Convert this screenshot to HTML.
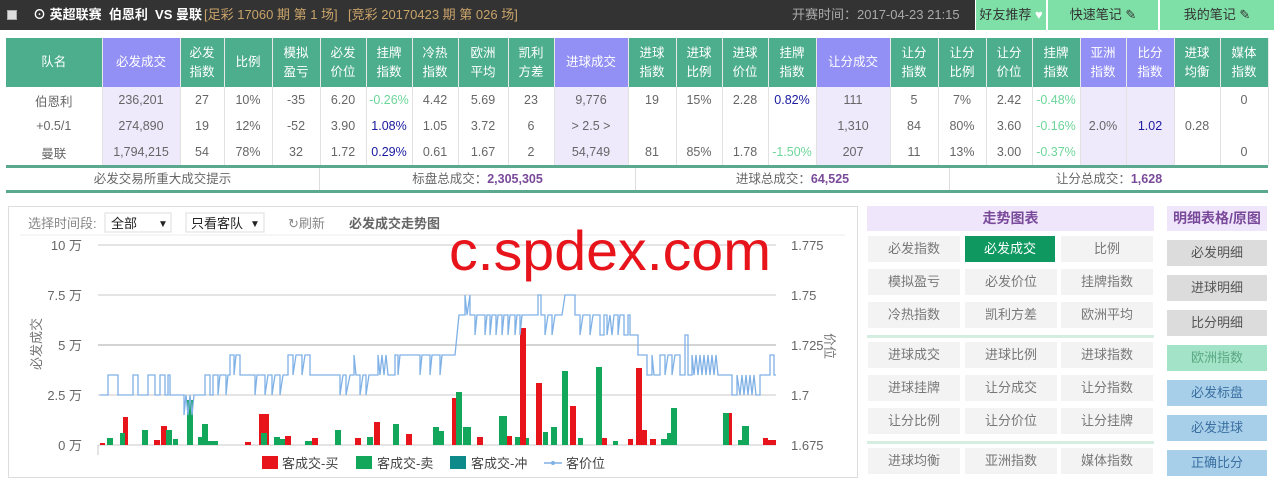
<!DOCTYPE html>
<html><head><meta charset="utf-8"><style>
*{margin:0;padding:0;box-sizing:border-box}
body{width:1274px;height:484px;background:#fff;font-family:"Liberation Sans","Noto Sans CJK SC",sans-serif;position:relative;overflow:hidden;color:#666}
.top{position:absolute;left:0;top:0;width:975px;height:30px;background:#333;color:#fff;font-size:13px;line-height:30px}
.top span{position:absolute;top:0;white-space:nowrap}
.btn{position:absolute;top:0;height:30px;background:#7ee0a7;color:#333;font-size:13px;line-height:30px;text-align:center}
table{position:absolute;left:6px;top:38px;border-collapse:collapse;table-layout:fixed;font-size:12.5px}
th{background:#4dae8d;color:#fff;font-weight:normal;height:49px;line-height:19px;border-right:1px solid #e8e8e8;text-align:center}
th.p{background:#9390f5}
td{height:26px;text-align:center;border-right:1px solid #e2e2e2;color:#666;padding:0}
td.p{background:#efe9fc}
.g{color:#6cd69a}.b{color:#1a1aa0}
.sum{position:absolute;left:6px;top:165px;width:1262px;height:28px;border-top:3px solid #5aa88d;border-bottom:3px solid #5aa88d;font-size:12.5px;line-height:22px}
.sum div{position:absolute;top:0;height:22px;text-align:center;border-right:1px solid #ddd}
.sum b{color:#7a4a9a}
.panel{position:absolute;left:8px;top:206px;width:850px;height:272px;border:1px solid #ddd}
.rb{position:absolute;height:26px;background:#f3f3f3;font-size:13px;line-height:26px;text-align:center;color:#777}
.rc{position:absolute;left:1167px;width:100px;height:26px;font-size:13px;line-height:26px;text-align:center;color:#555}
</style></head><body>
<div class="top">
<span style="left:7px;top:10px;width:10px;height:10px;background:#ddd;border:1px solid #aaa"></span>
<span style="left:33px;font-weight:bold">⊙ 英超联赛&nbsp;&nbsp;伯恩利&nbsp;&nbsp;VS 曼联</span>
<span style="left:204px;color:#c9a36a">[足彩 17060 期 第 1 场]</span>
<span style="left:348px;color:#c9a36a">[竞彩 20170423 期 第 026 场]</span>
<span style="left:792px;color:#aaa">开赛时间：2017-04-23 21:15</span>
</div>
<div class="btn" style="left:976px;width:70px">好友推荐 <span style="color:#fff">♥</span></div>
<div class="btn" style="left:1048px;width:110px">快速笔记 ✎</div>
<div class="btn" style="left:1160px;width:114px">我的笔记 ✎</div>

<table>
<colgroup><col style="width:96px"><col style="width:78px"><col style="width:44px"><col style="width:48px"><col style="width:48px"><col style="width:46px"><col style="width:46px"><col style="width:46px"><col style="width:50px"><col style="width:46px"><col style="width:74px"><col style="width:48px"><col style="width:46px"><col style="width:46px"><col style="width:48px"><col style="width:74px"><col style="width:48px"><col style="width:48px"><col style="width:46px"><col style="width:48px"><col style="width:46px"><col style="width:48px"><col style="width:46px"><col style="width:48px"></colgroup>
<tr><th>队名</th><th class="p">必发成交</th><th>必发<br>指数</th><th>比例</th><th>模拟<br>盈亏</th><th>必发<br>价位</th><th>挂牌<br>指数</th><th>冷热<br>指数</th><th>欧洲<br>平均</th><th>凯利<br>方差</th><th class="p">进球成交</th><th>进球<br>指数</th><th>进球<br>比例</th><th>进球<br>价位</th><th>挂牌<br>指数</th><th class="p">让分成交</th><th>让分<br>指数</th><th>让分<br>比例</th><th>让分<br>价位</th><th>挂牌<br>指数</th><th class="p">亚洲<br>指数</th><th class="p">比分<br>指数</th><th>进球<br>均衡</th><th>媒体<br>指数</th></tr>
<tr><td>伯恩利</td><td class="p">236,201</td><td>27</td><td>10%</td><td>-35</td><td>6.20</td><td class="g">-0.26%</td><td>4.42</td><td>5.69</td><td>23</td><td class="p">9,776</td><td>19</td><td>15%</td><td>2.28</td><td class="b">0.82%</td><td class="p">111</td><td>5</td><td>7%</td><td>2.42</td><td class="g">-0.48%</td><td class="p" rowspan="3">2.0%</td><td class="p b" rowspan="3">1.02</td><td rowspan="3">0.28</td><td>0</td></tr>
<tr><td>+0.5/1</td><td class="p">274,890</td><td>19</td><td>12%</td><td>-52</td><td>3.90</td><td class="b">1.08%</td><td>1.05</td><td>3.72</td><td>6</td><td class="p">&gt; 2.5 &gt;</td><td></td><td></td><td></td><td></td><td class="p">1,310</td><td>84</td><td>80%</td><td>3.60</td><td class="g">-0.16%</td><td></td></tr>
<tr><td>曼联</td><td class="p">1,794,215</td><td>54</td><td>78%</td><td>32</td><td>1.72</td><td class="b">0.29%</td><td>0.61</td><td>1.67</td><td>2</td><td class="p">54,749</td><td>81</td><td>85%</td><td>1.78</td><td class="g">-1.50%</td><td class="p">207</td><td>11</td><td>13%</td><td>3.00</td><td class="g">-0.37%</td><td>0</td></tr>
</table>
<div class="sum">
<div style="left:0;width:314px">必发交易所重大成交提示</div>
<div style="left:314px;width:316px">标盘总成交：<b>2,305,305</b></div>
<div style="left:630px;width:314px">进球总成交：<b>64,525</b></div>
<div style="left:944px;width:318px;border:none">让分总成交：<b>1,628</b></div>
</div>

<div class="panel"></div>
<svg style="position:absolute;left:0;top:0" width="860" height="484" font-family="Liberation Sans,Noto Sans CJK SC,sans-serif">
<text x="28" y="228" font-size="13" fill="#888">选择时间段:</text>
<rect x="105" y="213" width="66" height="19" fill="#fff" stroke="#ddd"/><text x="111" y="228" font-size="13" fill="#222">全部</text><text x="158" y="227" font-size="10" fill="#222">▼</text>
<rect x="186" y="213" width="78" height="19" fill="#fff" stroke="#ddd"/><text x="191" y="228" font-size="13" fill="#222">只看客队</text><text x="250" y="227" font-size="10" fill="#222">▼</text>
<text x="288" y="228" font-size="13" fill="#888">↻刷新</text>
<text x="349" y="228" font-size="13" fill="#666" font-weight="bold">必发成交走势图</text>
<line x1="20" y1="235" x2="845" y2="235" stroke="#eee"/>
<g stroke="#c8c8c8"><line x1="98" y1="245" x2="776" y2="245"/><line x1="98" y1="295" x2="776" y2="295"/><line x1="98" y1="345" x2="776" y2="345" stroke="#aaa"/><line x1="98" y1="395" x2="776" y2="395"/><line x1="98" y1="445" x2="776" y2="445"/><line x1="98" y1="445" x2="98" y2="455"/></g>
<g font-size="13" fill="#666" text-anchor="end"><text x="82" y="250">10 万</text><text x="82" y="300">7.5 万</text><text x="82" y="350">5 万</text><text x="82" y="400">2.5 万</text><text x="82" y="450">0 万</text></g>
<g font-size="13" fill="#666"><text x="791" y="250">1.775</text><text x="791" y="300">1.75</text><text x="791" y="350">1.725</text><text x="791" y="400">1.7</text><text x="791" y="450">1.675</text></g>
<text transform="translate(41,370) rotate(-90)" font-size="13" fill="#777">必发成交</text>
<text transform="translate(825,333) rotate(90)" font-size="13" fill="#777">价位</text>
<g fill="#e8141c">
<rect x="100" y="443" width="5" height="2"/><rect x="123" y="417" width="5" height="28"/><rect x="154" y="440" width="6" height="5"/><rect x="161" y="426" width="6" height="19"/><rect x="245" y="442" width="6" height="3"/><rect x="259" y="414" width="10" height="31"/><rect x="285" y="436" width="6" height="9"/><rect x="312" y="438" width="6" height="7"/><rect x="355" y="438" width="6" height="7"/><rect x="374" y="422" width="6" height="23"/><rect x="406" y="434" width="6" height="11"/><rect x="452" y="398" width="4" height="47"/><rect x="477" y="437" width="6" height="8"/><rect x="507" y="436" width="5" height="9"/><rect x="520" y="328" width="6" height="117"/><rect x="536" y="383" width="6" height="62"/><rect x="570" y="406" width="6" height="39"/><rect x="602" y="438" width="5" height="7"/><rect x="628" y="439" width="5" height="6"/><rect x="636" y="368" width="6" height="77"/><rect x="642" y="430" width="5" height="15"/><rect x="650" y="439" width="6" height="6"/><rect x="729" y="413" width="3" height="32"/><rect x="763" y="438" width="5" height="7"/><rect x="768" y="440" width="8" height="5"/>
</g>
<g fill="#12a75a">
<rect x="107" y="438" width="6" height="7"/><rect x="120" y="433" width="5" height="12"/><rect x="142" y="430" width="6" height="15"/><rect x="166" y="430" width="6" height="15"/><rect x="173" y="439" width="5" height="6"/><rect x="187" y="400" width="6" height="45"/><rect x="198" y="437" width="5" height="8"/><rect x="202" y="424" width="6" height="21"/><rect x="208" y="441" width="10" height="4"/><rect x="261" y="433" width="6" height="12"/><rect x="274" y="437" width="6" height="8"/><rect x="280" y="439" width="5" height="6"/><rect x="305" y="441" width="7" height="4"/><rect x="335" y="430" width="6" height="15"/><rect x="367" y="437" width="6" height="8"/><rect x="393" y="424" width="6" height="21"/><rect x="433" y="427" width="6" height="18"/><rect x="439" y="431" width="5" height="14"/><rect x="456" y="392" width="6" height="53"/><rect x="463" y="427" width="8" height="18"/><rect x="499" y="416" width="8" height="29"/><rect x="515" y="437" width="5" height="8"/><rect x="526" y="438" width="3" height="7"/><rect x="543" y="432" width="5" height="13"/><rect x="551" y="427" width="6" height="18"/><rect x="562" y="371" width="6" height="74"/><rect x="578" y="438" width="5" height="7"/><rect x="596" y="367" width="6" height="78"/><rect x="613" y="441" width="5" height="4"/><rect x="661" y="439" width="6" height="6"/><rect x="667" y="433" width="4" height="12"/><rect x="671" y="408" width="6" height="37"/><rect x="723" y="413" width="6" height="32"/><rect x="742" y="426" width="7" height="19"/><rect x="738" y="440" width="4" height="5"/>
</g>
<polyline fill="none" stroke="#7fb1e6" stroke-width="1.3" points="100,395 108,395 108,375 118,375 118,395 133,395 133,375 138,375 138,395 148,395 148,375 155,375 155,395 160,395 160,375 165,375 165,395 168,395 168,375 170,375 170,395 184,395 184,415 186,395 188,415 190,395 192,415 194,395 205,395 205,375 210,375 210,395 213,395 213,375 218,375 218,395 220,375 226,375 226,395 228,375 230,375 230,355 234,355 234,375 236,355 240,355 240,375 255,375 255,395 257,375 265,375 265,395 268,375 272,375 272,395 275,375 280,375 280,395 283,375 288,375 288,355 293,355 293,375 296,355 302,355 302,375 305,355 310,355 310,375 316,375 340,375 340,395 343,375 346,375 346,395 350,375 354,375 354,355 356,375 360,375 360,395 363,375 366,375 366,395 369,375 372,375 378,375 378,355 380,375 382,355 384,375 386,355 388,375 395,375 395,355 398,355 398,375 400,355 420,355 420,375 422,355 430,355 430,375 432,355 440,355 440,375 442,355 450,355 455,355 457,335 459,315 465,315 465,295 467,315 470,295 470,315 475,315 475,335 477,315 485,315 485,335 487,315 490,315 490,335 492,315 496,315 496,335 498,315 502,315 502,335 504,315 508,315 508,335 510,315 515,315 515,335 517,315 520,315 520,335 522,315 538,315 538,295 541,295 541,315 545,315 545,335 548,315 552,315 552,335 555,315 562,315 565,295 575,295 575,315 580,315 580,335 583,315 590,315 590,335 593,315 600,315 600,335 604,335 604,315 607,315 607,335 610,315 612,335 614,315 618,315 618,335 620,315 624,315 624,335 628,335 628,315 630,315 630,335 638,335 638,355 647,355 647,375 652,375 652,355 654,375 660,375 660,355 665,355 665,375 668,355 672,355 672,375 675,355 680,355 680,375 685,375 685,335 688,335 688,375 692,375 692,355 694,375 696,355 698,375 700,355 702,375 704,355 706,375 708,355 710,375 712,355 714,375 716,355 718,375 732,375 732,395 737,395 737,375 740,395 742,375 744,395 746,375 748,395 750,375 752,395 754,375 756,395 760,395 760,375 765,375 770,375 770,355 774,355 774,375 776,375"/>
<text x="449" y="270" font-size="56" fill="#e8141c" textLength="322" lengthAdjust="spacingAndGlyphs">c.spdex.com</text>
<rect x="262" y="456" width="16" height="13" fill="#e8141c"/><text x="282" y="468" font-size="13" fill="#444">客成交-买</text>
<rect x="356" y="456" width="16" height="13" fill="#12a75a"/><text x="377" y="468" font-size="13" fill="#444">客成交-卖</text>
<rect x="450" y="456" width="16" height="13" fill="#0e8a8a"/><text x="471" y="468" font-size="13" fill="#444">客成交-冲</text>
<line x1="544" y1="463" x2="562" y2="463" stroke="#7fb1e6" stroke-width="1.5"/><circle cx="553" cy="463" r="2" fill="#7fb1e6"/><text x="566" y="468" font-size="13" fill="#444">客价位</text>
</svg>

<div style="position:absolute;left:867px;top:206px;width:287px;height:25px;background:#efe6fb;color:#7a4a9a;font-weight:bold;font-size:14px;line-height:25px;text-align:center">走势图表</div>
<div style="position:absolute;left:1167px;top:206px;width:100px;height:25px;background:#efe6fb;color:#7a4a9a;font-weight:bold;font-size:14px;line-height:25px;text-align:center">明细表格/原图</div>
<div class="rb" style="left:868px;top:236px;width:92px">必发指数</div><div class="rb" style="left:965px;top:236px;width:90px;background:#0f9960;color:#fff">必发成交</div><div class="rb" style="left:1061px;top:236px;width:92px">比例</div>
<div class="rb" style="left:868px;top:269px;width:92px">模拟盈亏</div><div class="rb" style="left:965px;top:269px;width:92px">必发价位</div><div class="rb" style="left:1061px;top:269px;width:92px">挂牌指数</div>
<div class="rb" style="left:868px;top:302px;width:92px">冷热指数</div><div class="rb" style="left:965px;top:302px;width:92px">凯利方差</div><div class="rb" style="left:1061px;top:302px;width:92px">欧洲平均</div>
<div style="position:absolute;left:867px;top:335px;width:287px;height:3px;background:#d6eedf"></div>
<div class="rb" style="left:868px;top:342px;width:92px">进球成交</div><div class="rb" style="left:965px;top:342px;width:92px">进球比例</div><div class="rb" style="left:1061px;top:342px;width:92px">进球指数</div>
<div class="rb" style="left:868px;top:375px;width:92px">进球挂牌</div><div class="rb" style="left:965px;top:375px;width:92px">让分成交</div><div class="rb" style="left:1061px;top:375px;width:92px">让分指数</div>
<div class="rb" style="left:868px;top:408px;width:92px">让分比例</div><div class="rb" style="left:965px;top:408px;width:92px">让分价位</div><div class="rb" style="left:1061px;top:408px;width:92px">让分挂牌</div>
<div style="position:absolute;left:867px;top:441px;width:287px;height:3px;background:#d6eedf"></div>
<div class="rb" style="left:868px;top:448px;width:92px">进球均衡</div><div class="rb" style="left:965px;top:448px;width:92px">亚洲指数</div><div class="rb" style="left:1061px;top:448px;width:92px">媒体指数</div>
<div class="rc" style="top:240px;background:#dcdcdc">必发明细</div>
<div class="rc" style="top:275px;background:#dcdcdc">进球明细</div>
<div class="rc" style="top:310px;background:#dcdcdc">比分明细</div>
<div class="rc" style="top:345px;background:#a3e3c7;color:#5aa882">欧洲指数</div>
<div class="rc" style="top:380px;background:#a8cfea;color:#3a6fa0">必发标盘</div>
<div class="rc" style="top:415px;background:#a8cfea;color:#3a6fa0">必发进球</div>
<div class="rc" style="top:450px;background:#a8cfea;color:#3a6fa0">正确比分</div>
</body></html>
